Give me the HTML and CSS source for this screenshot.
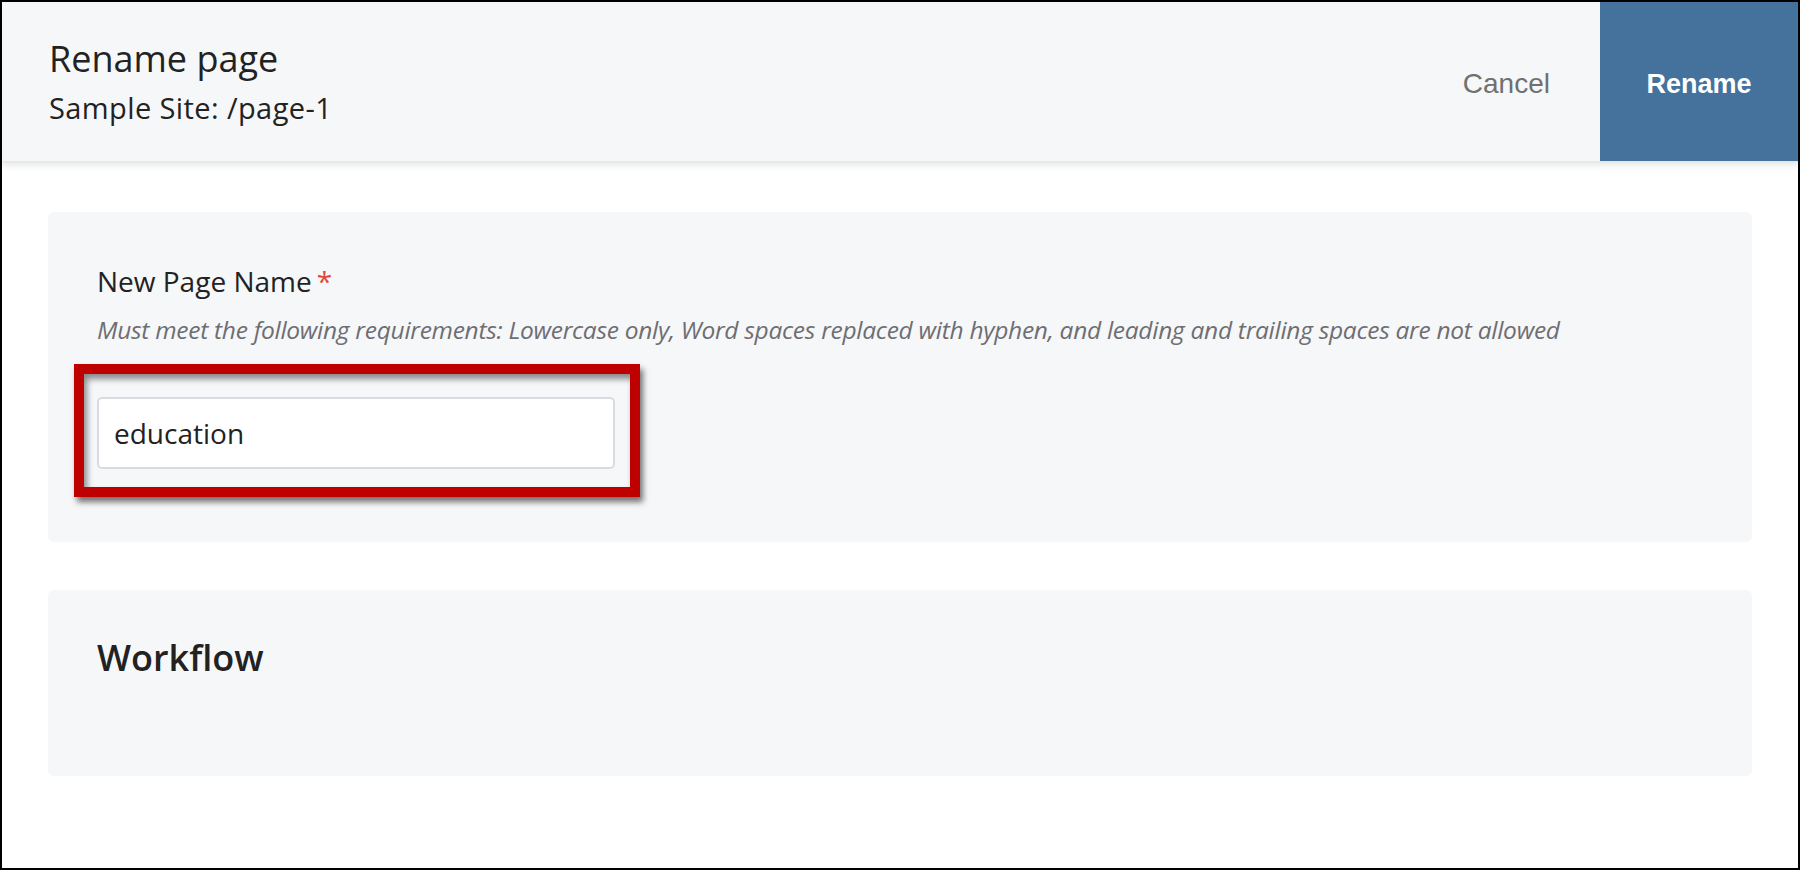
FILE: index.html
```html
<!DOCTYPE html>
<html lang="en">
<head>
<meta charset="utf-8">
<title>Rename page</title>
<link rel="stylesheet" href="styles.css">
</head>
<body>
<div class="frame">
  <header class="topbar">
    <div class="titles">
      <h1 class="title">Rename page</h1>
      <div class="subtitle">Sample Site: /page-1</div>
    </div>
    <div class="actions">
      <button class="btn-cancel" type="button">Cancel</button>
      <button class="btn-rename" type="button">Rename</button>
    </div>
  </header>
  <main class="content">
    <section class="card card-name">
      <label class="field-label" for="pname">New Page Name<span class="req">*</span></label>
      <p class="help">Must meet the following requirements: Lowercase only, Word spaces replaced with hyphen, and leading and trailing spaces are not allowed</p>
      <div class="input-wrap">
        <input id="pname" class="text-input" type="text" value="education">
        <div class="highlight"></div>
      </div>
    </section>
    <section class="card card-workflow">
      <h2 class="section-title">Workflow</h2>
    </section>
  </main>
</div>
</body>
</html>
```
FILE: styles.css
```css
* { box-sizing: border-box; }
html, body { margin: 0; padding: 0; background: #fff; }
body { font-family: "Open Sans", "Noto Sans", sans-serif; color: #222; }

.frame {
  width: 1800px;
  height: 870px;
  border: 2px solid #000;
  overflow: hidden;
  background: #fff;
}

.topbar {
  position: relative;
  z-index: 1;
  height: 160px;
  background: #f6f7f9;
  display: flex;
  justify-content: space-between;
  align-items: stretch;
  box-shadow: 0 2px 7px rgba(40, 50, 70, 0.16);
  border-bottom: 1px solid #e3e6ea;
}

.titles {
  padding: 35px 0 0 47px;
}
.title {
  margin: 0;
  font-size: 36px;
  line-height: 44px;
  font-weight: 400;
  color: #222;
}
.subtitle {
  margin-top: 7px;
  font-size: 29px;
  letter-spacing: 0.4px;
  line-height: 40px;
  color: #222;
}

.actions {
  display: flex;
  align-items: stretch;
}
.btn-cancel {
  border: 0;
  background: transparent;
  font-family: "Liberation Sans", Arial, sans-serif;
  font-size: 28px;
  color: #707070;
  padding: 5px 50px 0 50px;
  cursor: pointer;
}
.btn-rename {
  border: 0;
  width: 198px;
  padding: 5px 0 0 0;
  background: #44729c;
  color: #fff;
  font-family: "Liberation Sans", Arial, sans-serif;
  font-weight: 700;
  font-size: 27px;
  cursor: pointer;
}

.content {
  padding: 50px 46px 0 46px;
  display: flex;
  flex-direction: column;
  gap: 48px;
}

.card {
  background: #f6f7f9;
  border-radius: 6px;
}
.card-name {
  padding: 48px 48px 73px 49px;
}
.field-label {
  display: block;
  font-size: 28px;
  line-height: 42px;
  color: #222;
}
.req {
  color: #e8463d;
  margin-left: 5px;
}
.help {
  margin: 11px 0 0 0;
  font-style: italic;
  font-size: 24.5px;
  letter-spacing: -0.28px;
  line-height: 34px;
  color: #6e6e72;
}

.input-wrap {
  position: relative;
  width: 518px;
  margin-top: 50px;
}
.text-input {
  display: block;
  width: 518px;
  height: 72px;
  border: 2px solid #d8dce2;
  border-radius: 5px;
  background: #fff;
  padding: 0 0 0 15px;
  font-family: "Open Sans", "Noto Sans", sans-serif;
  font-size: 28px;
  color: #222;
  outline: none;
}
.highlight {
  position: absolute;
  left: -23px;
  top: -33px;
  right: -25px;
  bottom: -28px;
  border: 10px solid #bf0000;
  box-shadow: 3px 5px 6px rgba(0, 0, 0, 0.55), inset 3px 5px 6px rgba(0, 0, 0, 0.45);
  pointer-events: none;
}

.card-workflow {
  height: 186px;
  padding: 46px 48px 0 49px;
}
.section-title {
  margin: 0;
  font-size: 36px;
  line-height: 44px;
  font-weight: 600;
  color: #222;
}
```
